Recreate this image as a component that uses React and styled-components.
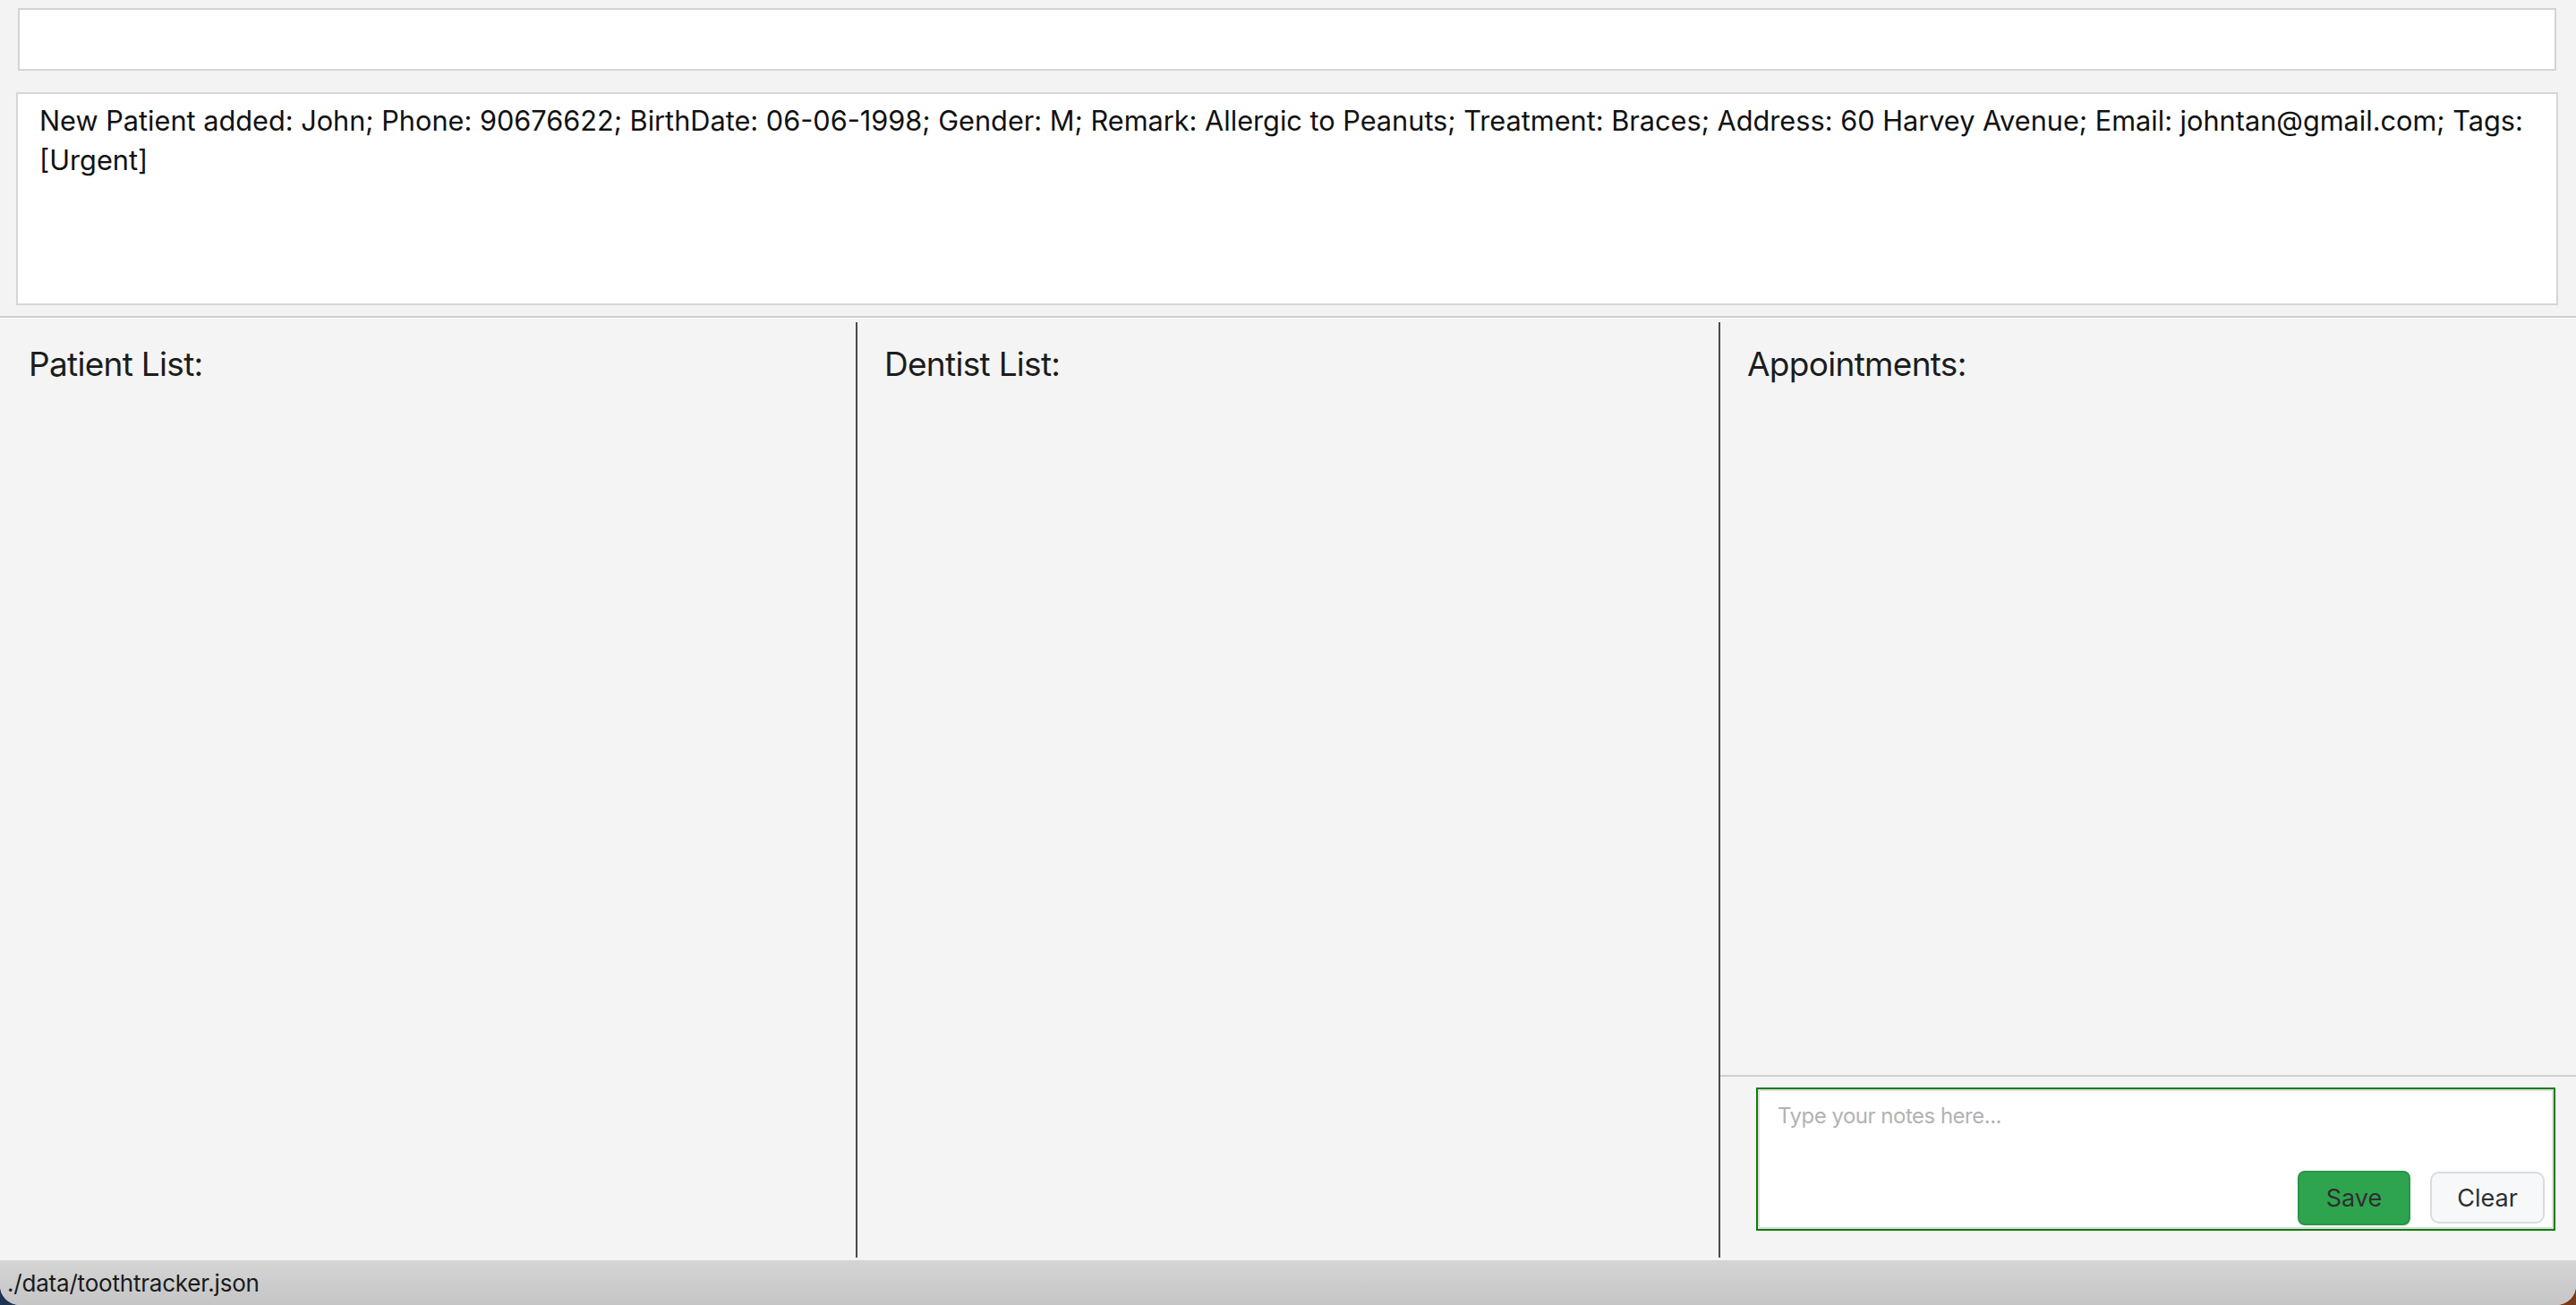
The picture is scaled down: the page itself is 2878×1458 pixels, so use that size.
import React from 'react'
import styled, { createGlobalStyle } from 'styled-components'

const GlobalStyle = createGlobalStyle`
  html, body {
    margin: 0;
    padding: 0;
    height: 100%;
  }
  body {
    background: linear-gradient(90deg, #1f3452 0%, #4a3a3a 50%, #7a3b1c 100%);
    font-family: Inter, "Noto Sans", "Liberation Sans", sans-serif;
  }
  * {
    box-sizing: border-box;
  }
`

const Window = styled.div`
  width: 2878px;
  height: 1458px;
  display: flex;
  flex-direction: column;
  background: #f3f3f3;
  border-radius: 0 0 22px 22px;
  overflow: hidden;
`

const CommandBox = styled.div`
  height: 70px;
  margin: 9px 22px 0 20px;
  background: #ffffff;
  border: 2px solid #d4d4d4;
`

const ResultBox = styled.div`
  height: 238px;
  margin: 24px 20px 0 18px;
  padding: 8px 24px;
  background: #ffffff;
  border: 2px solid #d6d6d6;
  font-size: 30.7px;
  line-height: 44px;
  color: #111111;
`

const Separator = styled.div`
  margin-top: 12px;
  border-top: 2px solid #cdcdcd;
  border-bottom: 1px solid #ffffff;
`

const Panels = styled.div`
  flex: 1;
  display: grid;
  grid-template-columns: 956px 964px 1fr;
  padding: 4px 0 3px;
  background: #f4f4f4;
  min-height: 0;
`

const Panel = styled.section`
  display: flex;
  flex-direction: column;
  border-left: 2px solid ${p => (p.$divided ? '#4a4a4a' : 'transparent')};
  min-height: 0;
`

const Title = styled.h2`
  margin: 0;
  padding: 24px 30px 0;
  font-size: 37px;
  font-weight: 400;
  color: #1c1c1c;
  letter-spacing: -0.7px;
`

const Spacer = styled.div`
  flex: 1;
`

const NotesArea = styled.div`
  border-top: 2px solid #d0d0d0;
  padding: 12px 23px 30px 40px;
`

const NotesBox = styled.div`
  height: 160px;
  display: flex;
  flex-direction: column;
  border: 2px solid #0a7f0a;
  box-shadow: inset 0 0 0 2px #dedede;
  background: #ffffff;
`

const NotesInput = styled.textarea`
  flex: 1;
  resize: none;
  border: none;
  outline: none;
  background: transparent;
  padding: 13px 20px 0;
  margin: 2px 2px 0;
  font-family: Inter, "Noto Sans", "Liberation Sans", sans-serif;
  font-size: 24px;
  color: #222;
  letter-spacing: -0.5px;

  &::placeholder {
    color: #b2b2b2;
  }
`

const ButtonRow = styled.div`
  display: flex;
  justify-content: flex-end;
  align-items: flex-end;
  gap: 22px;
  padding: 0 10px 4px;
`

const Button = styled.button`
  width: ${p => (p.$primary ? '126px' : '128px')};
  height: ${p => (p.$primary ? '61px' : '58px')};
  margin-bottom: ${p => (p.$primary ? '0' : '2px')};
  border-radius: ${p => (p.$primary ? '8px' : '10px')};
  border: 2px solid ${p => (p.$primary ? '#2a9447' : '#d9dbde')};
  background: ${p => (p.$primary ? '#2ea44f' : '#f7f8fa')};
  color: #2e2e2e;
  font-family: Inter, "Noto Sans", "Liberation Sans", sans-serif;
  font-size: 27px;
  padding: 0;
  cursor: pointer;
`

const StatusBar = styled.div`
  height: 50px;
  display: flex;
  align-items: center;
  padding: 0 8px;
  background: linear-gradient(180deg, #d5d5d5 0%, #c5c5c5 100%);
  font-size: 26px;
  color: #1a1a1a;
  letter-spacing: -0.2px;
`

const resultText =
  'New Patient added: John; Phone: 90676622; BirthDate: 06-06-1998; Gender: M; Remark: Allergic to Peanuts; Treatment: Braces; Address: 60 Harvey Avenue; Email: johntan@gmail.com; Tags: [Urgent]'

export default function App() {
  return (
    <>
      <GlobalStyle />
      <Window>
        <CommandBox />
        <ResultBox>{resultText}</ResultBox>
        <Separator />
        <Panels>
          <Panel>
            <Title>Patient List:</Title>
          </Panel>
          <Panel $divided>
            <Title>Dentist List:</Title>
          </Panel>
          <Panel $divided>
            <Title>Appointments:</Title>
            <Spacer />
            <NotesArea>
              <NotesBox>
                <NotesInput placeholder="Type your notes here..." />
                <ButtonRow>
                  <Button $primary>Save</Button>
                  <Button>Clear</Button>
                </ButtonRow>
              </NotesBox>
            </NotesArea>
          </Panel>
        </Panels>
        <StatusBar>./data/toothtracker.json</StatusBar>
      </Window>
    </>
  )
}
